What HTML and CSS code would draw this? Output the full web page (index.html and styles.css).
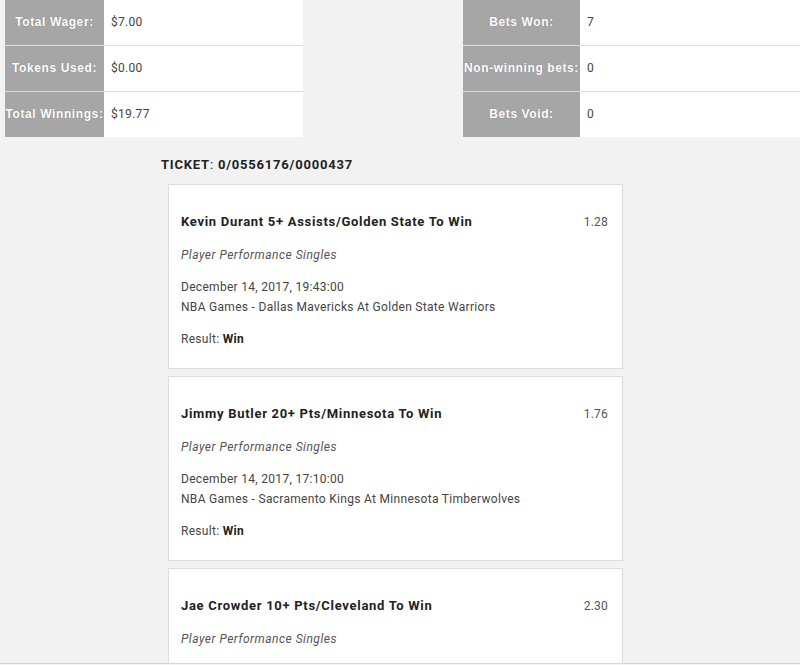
FILE: index.html
```html
<!DOCTYPE html>
<html>
<head>
<meta charset="utf-8">
<link rel="stylesheet" href="styles.css">
</head>
<body>
<div class="stats">
  <table class="stat-table left">
    <tr><th>Total Wager:</th><td>$7.00</td></tr>
    <tr><th>Tokens Used:</th><td>$0.00</td></tr>
    <tr><th>Total Winnings:</th><td>$19.77</td></tr>
  </table>
  <table class="stat-table right">
    <tr><th>Bets Won:</th><td>7</td></tr>
    <tr><th>Non-winning bets:</th><td>0</td></tr>
    <tr><th>Bets Void:</th><td>0</td></tr>
  </table>
</div>
<div class="ticket">
  <h2 class="ticket-title"><b>TICKET</b>: <b>0/0556176/0000437</b></h2>
  <div class="bet">
    <div class="bet-head"><span class="bet-name">Kevin Durant 5+ Assists/Golden State To Win</span><span class="odds">1.28</span></div>
    <div class="bet-type">Player Performance Singles</div>
    <div class="bet-info">December 14, 2017, 19:43:00<br>NBA Games - Dallas Mavericks At Golden State Warriors</div>
    <div class="bet-result">Result: <b>Win</b></div>
  </div>
  <div class="bet">
    <div class="bet-head"><span class="bet-name">Jimmy Butler 20+ Pts/Minnesota To Win</span><span class="odds">1.76</span></div>
    <div class="bet-type">Player Performance Singles</div>
    <div class="bet-info">December 14, 2017, 17:10:00<br>NBA Games - Sacramento Kings At Minnesota Timberwolves</div>
    <div class="bet-result">Result: <b>Win</b></div>
  </div>
  <div class="bet">
    <div class="bet-head"><span class="bet-name">Jae Crowder 10+ Pts/Cleveland To Win</span><span class="odds">2.30</span></div>
    <div class="bet-type">Player Performance Singles</div>
    <div class="bet-info">December 14, 2017, 19:00:00<br>NBA Games - Cleveland Cavaliers At Cleveland</div>
    <div class="bet-result">Result: <b>Win</b></div>
  </div>
</div>
<div class="bottom-bar"></div>
</body>
</html>
```
FILE: styles.css
```css
html, body {
  margin: 0;
  padding: 0;
  background: #f2f2f2;
  font-family: Roboto, "Liberation Sans", sans-serif;
  color: #333;
  overflow: hidden;
}
.stats {
  display: flex;
  justify-content: space-between;
  margin-top: -1px;
  padding-left: 5px;
}
.stat-table {
  border-collapse: collapse;
  background: #fff;
}
.stat-table.left { width: 298px; }
.stat-table.right { width: 337px; }
.stat-table tr { height: 46px; }
.stat-table tr + tr { border-top: 1px solid #dedede; }
.stat-table th {
  background: #a6a6a6;
  color: #fff;
  font-family: "Liberation Sans", Arial, sans-serif;
  font-weight: bold;
  font-size: 12px;
  letter-spacing: 0.6px;
  text-align: center;
  padding: 0;
  white-space: nowrap;
  text-shadow: 0 0 1px #777;
}
.stat-table.left th { width: 99px; }
.stat-table.right th { width: 117px; }
.stat-table td {
  padding: 0 7px;
  font-size: 12px;
  letter-spacing: 0.3px;
  color: #444;
}
.ticket {
  padding-left: 161px;
}
.ticket-title {
  margin: 18px 0 0;
  font-size: 13px;
  line-height: 20px;
  letter-spacing: 0.8px;
  font-weight: normal;
  color: #222;
}
.ticket-title b { font-weight: bold; }
.bet {
  box-sizing: border-box;
  width: 455px;
  height: 185px;
  margin: 9px 0 0 7px;
  background: #fff;
  border: 1px solid #dcdcdc;
  padding: 27px 14px 0 12px;
}
.bet + .bet { margin-top: 7px; }
.bet-head {
  display: flex;
  justify-content: space-between;
  line-height: 20px;
}
.bet-name {
  font-weight: bold;
  font-size: 13px;
  letter-spacing: 0.7px;
  color: #222;
}
.odds {
  font-size: 12px;
  letter-spacing: 0.2px;
  color: #555;
}
.bet-type {
  margin-top: 13px;
  font-style: italic;
  font-size: 12px;
  letter-spacing: 0.5px;
  line-height: 20px;
  color: #555;
}
.bet-info {
  margin-top: 12px;
  font-size: 12px;
  letter-spacing: 0.3px;
  line-height: 20px;
  color: #444;
}
.bet-result {
  margin-top: 12px;
  font-size: 12px;
  letter-spacing: 0.3px;
  line-height: 20px;
  color: #444;
}
.bet-result b { color: #222; }
.bottom-bar {
  position: fixed;
  left: 0;
  right: 0;
  bottom: 0;
  height: 1px;
  border-top: 1px solid #d3d6de;
  background: #f4f4f6;
}
```
